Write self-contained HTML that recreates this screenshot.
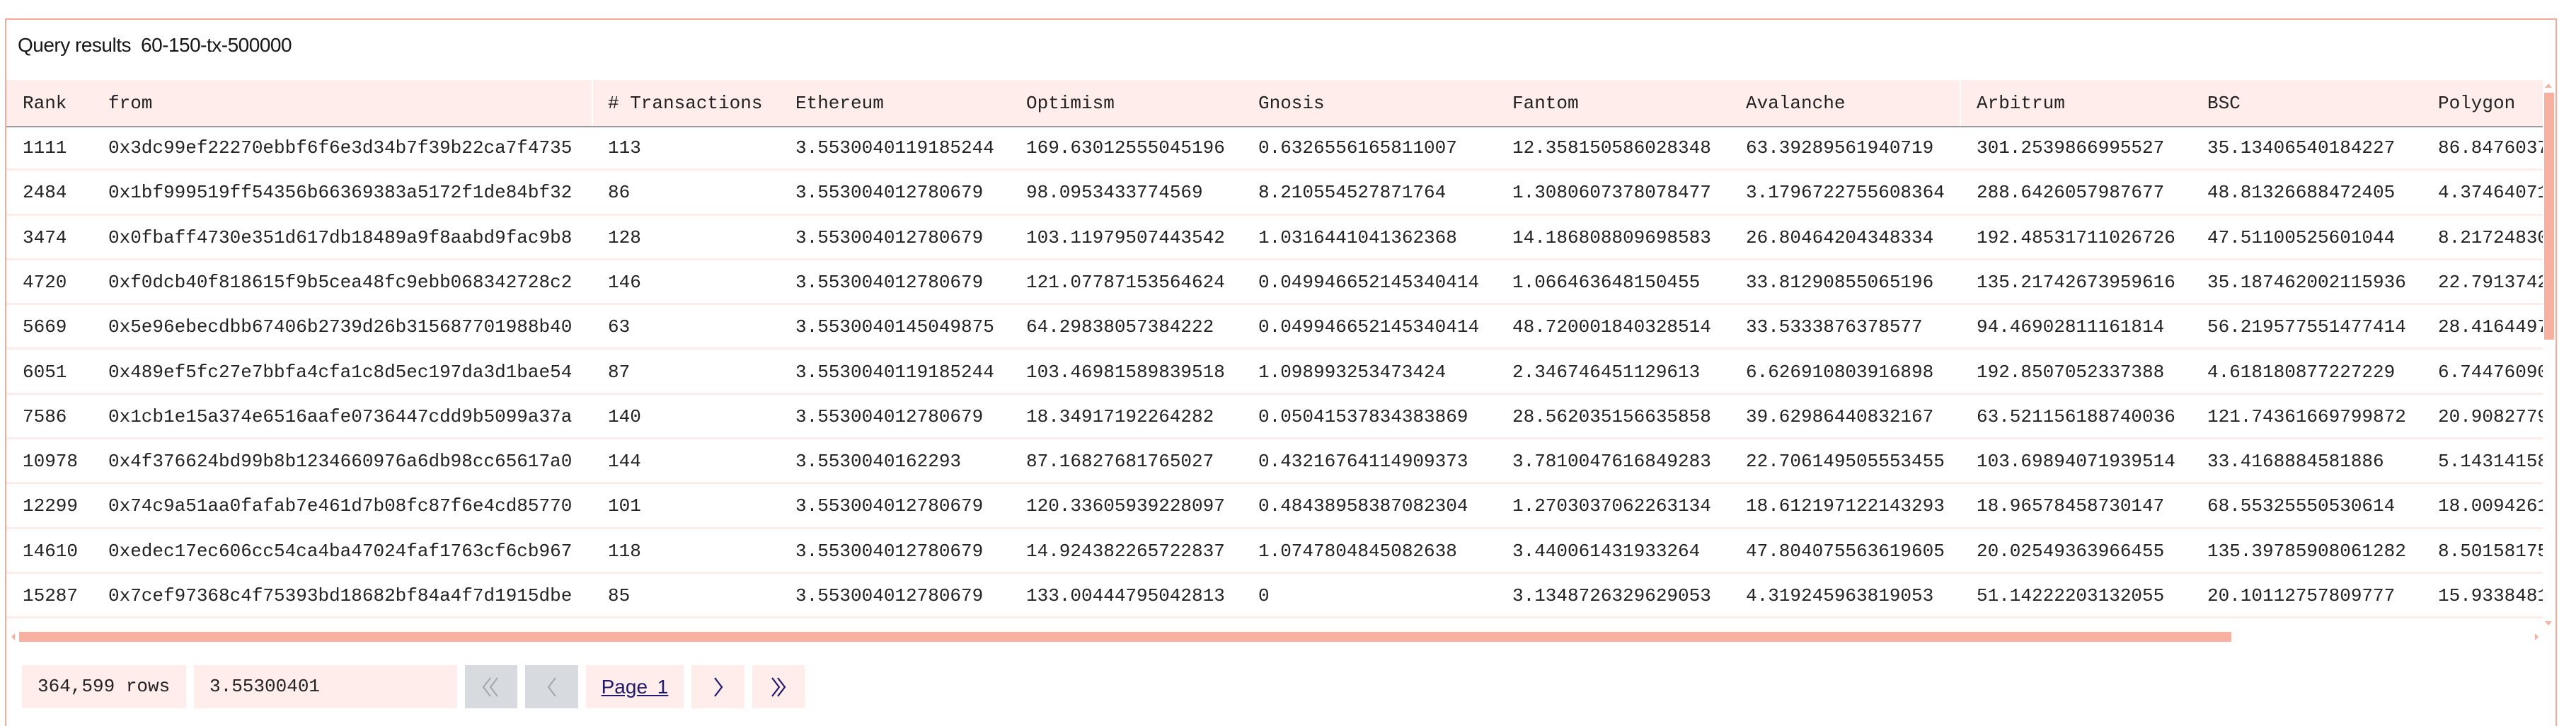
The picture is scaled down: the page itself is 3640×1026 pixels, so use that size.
<!DOCTYPE html>
<html><head><meta charset="utf-8"><style>
*{margin:0;padding:0;box-sizing:border-box}
body{width:3640px;height:1014px;overflow:hidden;background:#fff;font-family:"Liberation Mono",monospace;color:#222;position:relative}
#box{position:absolute;left:7px;top:26px;width:3606px;height:1000px;border:2px solid #f4ab9b;border-bottom:none}
.title{position:absolute;left:25px;top:48px;font:28px "Liberation Sans",sans-serif;color:#161616;letter-spacing:-0.5px}
.title span{margin-left:14px}
#tbl{position:absolute;left:9px;top:113px;width:3584px;height:770px;overflow:hidden}
.hdr{position:absolute;left:0;top:0;width:3584px;height:67px;background:#feedeb;border-bottom:2px solid #9a9ca3}
.row{position:absolute;left:0;width:3584px;height:63.3px;border-bottom:3px solid #fdecea}
.c{position:absolute;top:0;line-height:63px;font-size:26px;white-space:nowrap}
.hdr .c{line-height:67px}
.vd{position:absolute;top:0;width:2px;height:65px;background:#fff}
.k0{left:23px}.k1{left:144px}.k2{left:850px}.k3{left:1115px}.k4{left:1441px}.k5{left:1769px}.k6{left:2128px}.k7{left:2458px}.k8{left:2784px}.k9{left:3110px}.k10{left:3436px}
.fb{position:absolute;top:940px;height:61px;background:#feedeb;font-size:26px;line-height:61px}
.btn{position:absolute;top:940px;height:61px;display:flex;align-items:center;justify-content:center}
</style></head><body>
<div id="box"></div>
<div class="title">Query results<span>60-150-tx-500000</span></div>
<div id="tbl">
<div class="hdr"><div class="c k0">Rank</div><div class="c k1">from</div><div class="vd" style="left:827px"></div><div class="c k2"># Transactions</div><div class="c k3">Ethereum</div><div class="c k4">Optimism</div><div class="c k5">Gnosis</div><div class="c k6">Fantom</div><div class="c k7">Avalanche</div><div class="vd" style="left:2760px"></div><div class="c k8">Arbitrum</div><div class="c k9">BSC</div><div class="c k10">Polygon</div></div>

<div class="row" style="top:65px"><div class="c k0">1111</div><div class="c k1">0x3dc99ef22270ebbf6f6e3d34b7f39b22ca7f4735</div><div class="c k2">113</div><div class="c k3">3.5530040119185244</div><div class="c k4">169.63012555045196</div><div class="c k5">0.6326556165811007</div><div class="c k6">12.358150586028348</div><div class="c k7">63.39289561940719</div><div class="c k8">301.2539866995527</div><div class="c k9">35.13406540184227</div><div class="c k10">86.84760371234</div></div>
<div class="row" style="top:128.3px"><div class="c k0">2484</div><div class="c k1">0x1bf999519ff54356b66369383a5172f1de84bf32</div><div class="c k2">86</div><div class="c k3">3.553004012780679</div><div class="c k4">98.0953433774569</div><div class="c k5">8.210554527871764</div><div class="c k6">1.3080607378078477</div><div class="c k7">3.1796722755608364</div><div class="c k8">288.6426057987677</div><div class="c k9">48.81326688472405</div><div class="c k10">4.37464071234</div></div>
<div class="row" style="top:191.6px"><div class="c k0">3474</div><div class="c k1">0x0fbaff4730e351d617db18489a9f8aabd9fac9b8</div><div class="c k2">128</div><div class="c k3">3.553004012780679</div><div class="c k4">103.11979507443542</div><div class="c k5">1.0316441041362368</div><div class="c k6">14.186808809698583</div><div class="c k7">26.80464204348334</div><div class="c k8">192.48531711026726</div><div class="c k9">47.51100525601044</div><div class="c k10">8.21724830123</div></div>
<div class="row" style="top:254.9px"><div class="c k0">4720</div><div class="c k1">0xf0dcb40f818615f9b5cea48fc9ebb068342728c2</div><div class="c k2">146</div><div class="c k3">3.553004012780679</div><div class="c k4">121.07787153564624</div><div class="c k5">0.049946652145340414</div><div class="c k6">1.066463648150455</div><div class="c k7">33.81290855065196</div><div class="c k8">135.21742673959616</div><div class="c k9">35.187462002115936</div><div class="c k10">22.79137421234</div></div>
<div class="row" style="top:318.2px"><div class="c k0">5669</div><div class="c k1">0x5e96ebecdbb67406b2739d26b315687701988b40</div><div class="c k2">63</div><div class="c k3">3.5530040145049875</div><div class="c k4">64.29838057384222</div><div class="c k5">0.049946652145340414</div><div class="c k6">48.720001840328514</div><div class="c k7">33.5333876378577</div><div class="c k8">94.46902811161814</div><div class="c k9">56.219577551477414</div><div class="c k10">28.41644971234</div></div>
<div class="row" style="top:381.5px"><div class="c k0">6051</div><div class="c k1">0x489ef5fc27e7bbfa4cfa1c8d5ec197da3d1bae54</div><div class="c k2">87</div><div class="c k3">3.5530040119185244</div><div class="c k4">103.46981589839518</div><div class="c k5">1.098993253473424</div><div class="c k6">2.346746451129613</div><div class="c k7">6.626910803916898</div><div class="c k8">192.8507052337388</div><div class="c k9">4.618180877227229</div><div class="c k10">6.74476090123</div></div>
<div class="row" style="top:444.8px"><div class="c k0">7586</div><div class="c k1">0x1cb1e15a374e6516aafe0736447cdd9b5099a37a</div><div class="c k2">140</div><div class="c k3">3.553004012780679</div><div class="c k4">18.34917192264282</div><div class="c k5">0.05041537834383869</div><div class="c k6">28.562035156635858</div><div class="c k7">39.62986440832167</div><div class="c k8">63.521156188740036</div><div class="c k9">121.74361669799872</div><div class="c k10">20.90827791234</div></div>
<div class="row" style="top:508.1px"><div class="c k0">10978</div><div class="c k1">0x4f376624bd99b8b1234660976a6db98cc65617a0</div><div class="c k2">144</div><div class="c k3">3.5530040162293</div><div class="c k4">87.16827681765027</div><div class="c k5">0.43216764114909373</div><div class="c k6">3.7810047616849283</div><div class="c k7">22.706149505553455</div><div class="c k8">103.69894071939514</div><div class="c k9">33.4168884581886</div><div class="c k10">5.14314158123</div></div>
<div class="row" style="top:571.4px"><div class="c k0">12299</div><div class="c k1">0x74c9a51aa0fafab7e461d7b08fc87f6e4cd85770</div><div class="c k2">101</div><div class="c k3">3.553004012780679</div><div class="c k4">120.33605939228097</div><div class="c k5">0.48438958387082304</div><div class="c k6">1.2703037062263134</div><div class="c k7">18.612197122143293</div><div class="c k8">18.96578458730147</div><div class="c k9">68.55325550530614</div><div class="c k10">18.00942611234</div></div>
<div class="row" style="top:634.7px"><div class="c k0">14610</div><div class="c k1">0xedec17ec606cc54ca4ba47024faf1763cf6cb967</div><div class="c k2">118</div><div class="c k3">3.553004012780679</div><div class="c k4">14.924382265722837</div><div class="c k5">1.0747804845082638</div><div class="c k6">3.440061431933264</div><div class="c k7">47.804075563619605</div><div class="c k8">20.02549363966455</div><div class="c k9">135.39785908061282</div><div class="c k10">8.50158175123</div></div>
<div class="row" style="top:698px"><div class="c k0">15287</div><div class="c k1">0x7cef97368c4f75393bd18682bf84a4f7d1915dbe</div><div class="c k2">85</div><div class="c k3">3.553004012780679</div><div class="c k4">133.00444795042813</div><div class="c k5">0</div><div class="c k6">3.1348726329629053</div><div class="c k7">4.319245963819053</div><div class="c k8">51.14222203132055</div><div class="c k9">20.10112757809777</div><div class="c k10">15.93384811234</div></div>
</div>
<!-- vertical scrollbar -->
<div style="position:absolute;left:3596px;top:118px;width:0;height:0;border-left:5px solid transparent;border-right:5px solid transparent;border-bottom:6px solid #f7b1a0"></div>
<div style="position:absolute;left:3595px;top:131px;width:14px;height:349px;background:#f8b1a0"></div>
<div style="position:absolute;left:3596px;top:878px;width:0;height:0;border-left:5px solid transparent;border-right:5px solid transparent;border-top:6px solid #f7b1a0"></div>
<!-- horizontal scrollbar -->
<div style="position:absolute;left:16px;top:895px;width:0;height:0;border-top:5px solid transparent;border-bottom:5px solid transparent;border-right:5px solid #f7b1a0"></div>
<div style="position:absolute;left:27px;top:893px;width:3126px;height:14px;background:#f8b1a0"></div>
<div style="position:absolute;left:3582px;top:895px;width:0;height:0;border-top:5px solid transparent;border-bottom:5px solid transparent;border-left:5px solid #f7b1a0"></div>
<!-- footer -->
<div class="fb" style="left:31px;width:232px;padding-left:22px">364,599 rows</div>
<div class="fb" style="left:274px;width:372px;padding-left:22px">3.55300401</div>
<div class="btn" style="left:657px;width:74px;background:#d7dbdf"><svg width="26" height="30" viewBox="0 0 26 30"><path d="M12 2 L2 15 L12 28 M22 2 L12 15 L22 28" fill="none" stroke="#a3a6aa" stroke-width="2"/></svg></div>
<div class="btn" style="left:742px;width:75px;background:#d7dbdf"><svg width="16" height="30" viewBox="0 0 16 30"><path d="M13 2 L3 15 L13 28" fill="none" stroke="#a3a6aa" stroke-width="2"/></svg></div>
<div class="btn" style="left:828px;width:138px;background:#feedeb;font:28px 'Liberation Sans',sans-serif;color:#1f1a6b;text-decoration:underline;word-spacing:6px">Page 1</div>
<div class="btn" style="left:977px;width:75px;background:#feedeb"><svg width="16" height="30" viewBox="0 0 16 30"><path d="M3 2 L13 15 L3 28" fill="none" stroke="#1f1a6b" stroke-width="2.2"/></svg></div>
<div class="btn" style="left:1063px;width:74px;background:#feedeb"><svg width="26" height="30" viewBox="0 0 26 30"><path d="M4 2 L14 15 L4 28 M12 2 L22 15 L12 28" fill="none" stroke="#1f1a6b" stroke-width="2.2"/></svg></div>
</body></html>
